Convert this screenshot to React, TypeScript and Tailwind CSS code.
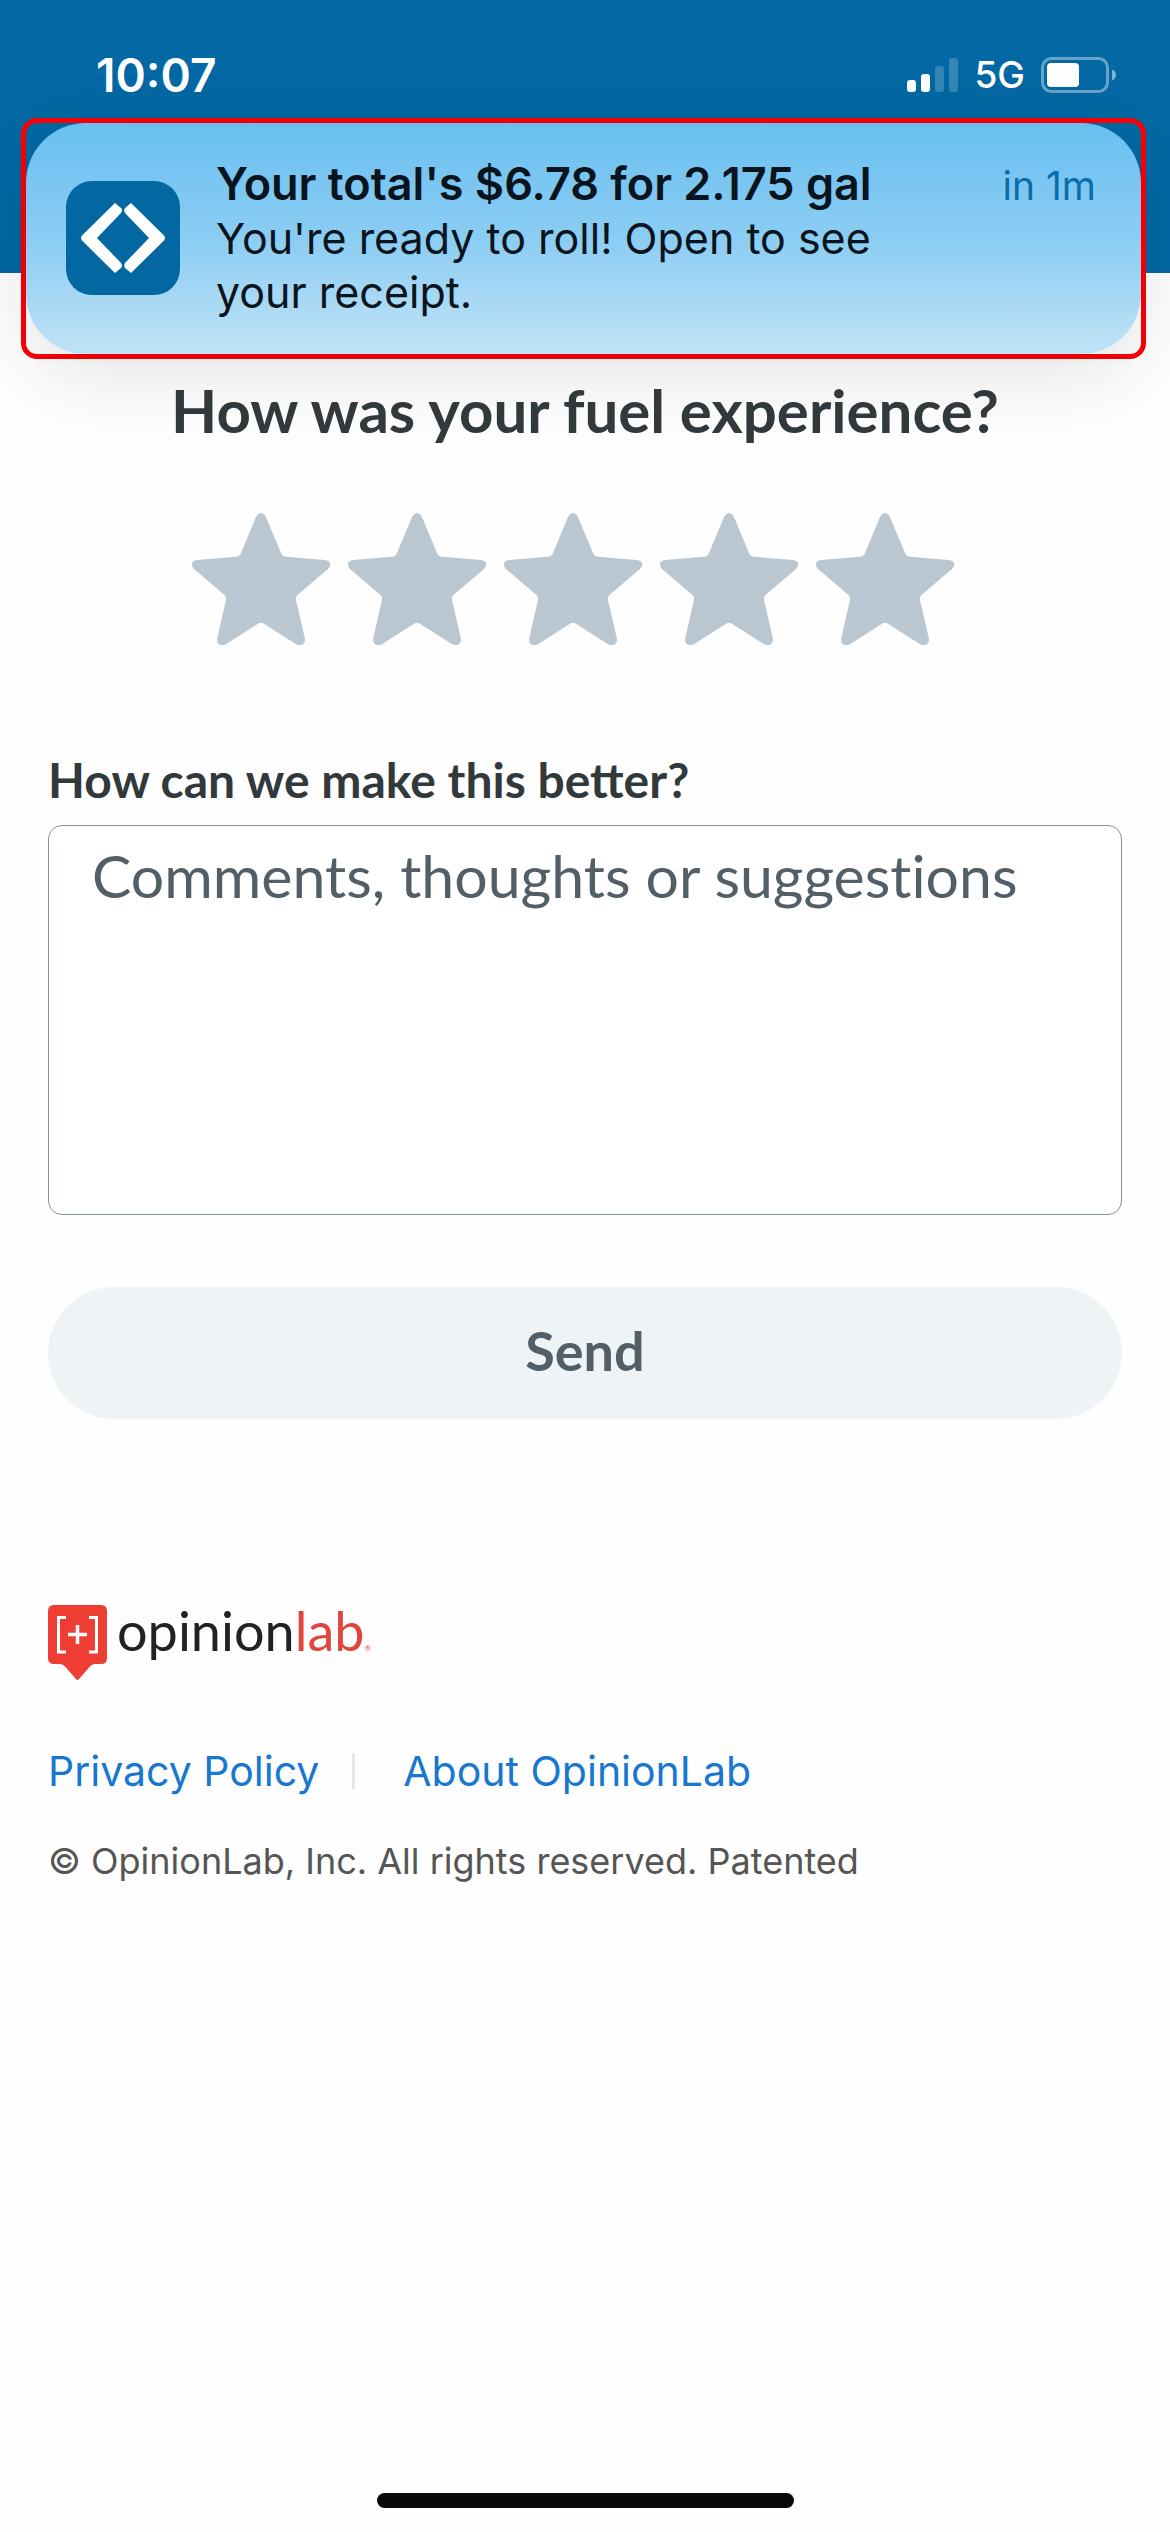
import React from "react";

function StatusBar() {
  return (
    <div className="flex items-center justify-between pt-[45px] pr-[53px] pl-[96px] text-white">
      <time className="text-[46px] leading-[60px] font-semibold">10:07</time>
      <div className="flex items-center">
        <svg className="h-[36px] w-[52px]" viewBox="0 0 52 36" fill="white" aria-label="Signal strength">
          <rect x="0" y="23" width="9" height="12" rx="3" />
          <rect x="14" y="17" width="9" height="18" rx="3" />
          <rect x="28" y="9" width="9" height="26" rx="3" opacity="0.2" />
          <rect x="42" y="1" width="9" height="34" rx="3" opacity="0.2" />
        </svg>
        <span className="mr-[16px] ml-[15px] text-[37px] leading-[60px] font-medium">5G</span>
        <svg className="h-[36px] w-[76px]" viewBox="0 0 76 36" fill="none" aria-label="Battery">
          <rect x="1.5" y="1.5" width="65" height="33" rx="9" stroke="white" strokeOpacity="0.4" strokeWidth="3" />
          <rect x="6" y="6" width="32" height="24" rx="4" fill="white" />
          <path d="M71 12.5C76.500 15 76.500 21 71 23.500Z" fill="white" fillOpacity="0.5" />
        </svg>
      </div>
    </div>
  );
}

function Notification() {
  return (
    <aside
      role="alert"
      className="absolute top-[118px] right-[24px] left-[21px] rounded-[16px] border-5 border-[#fb0007]"
    >
      <div className="flex items-center rounded-[60px] bg-linear-to-b from-[#68bff0] via-[#8bcdf3] to-[#c1e2f5] pt-[34px] pr-[45px] pb-[35px] pl-[40px] shadow-[0_20px_80px_rgba(0,0,0,0.11)]">
        <svg className="size-[114px] shrink-0" viewBox="0 0 114 114" aria-label="Sam's Club">
          <rect width="114" height="114" rx="26" fill="#0367a2" />
          <path d="M49 22L55 27Q57 29 55 32L31 57L55 82Q57 85 55 87L49 92L16 59.500Q14 57 16 54.500Z" fill="white" />
          <path d="M65 22L59 27Q57.500 29 59 32L83 57L59 82Q57.500 85 59 87L65 92L98 59.500Q100 57 98 54.500Z" fill="white" />
        </svg>
        <div className="ml-[36px] flex-1 text-[#0a141c]">
          <div className="flex h-[54px] items-baseline justify-between leading-[54px]">
            <strong className="text-[45px] font-semibold">Your total's $6.78 for 2.175 gal</strong>
            <span className="text-[39px] text-[#0a6dab]">in 1m</span>
          </div>
          <p className="max-w-[720px] text-[43px] leading-[54px]">You're ready to roll! Open to see your receipt.</p>
        </div>
      </div>
    </aside>
  );
}

function Star({ value }: { value: number }) {
  return (
    <label className="block cursor-pointer">
      <input type="radio" name="rating" value={value} aria-label={`${value} stars`} className="sr-only" />
      <svg className="h-[132px] w-[138px] fill-[#bac7d0]" viewBox="0 0 138 132">
        <path d="M64 4Q69-4 74 4L89 40Q90.500 43.500 94 43.700L133 47Q141.500 49 136 56L105.500 82Q103.500 84 104 87L113 126Q113 134 104.500 131.500L71.500 110.500Q69 109 66.500 110.500L33.500 131.500Q25 134 25 126L34 87Q34.500 84 32.500 82L2 56Q-3.500 49 5 47L44 43.700Q47.500 43.500 49 40Z" />
      </svg>
    </label>
  );
}

function OpinionLabLogo() {
  return (
    <div className="flex items-start">
      <svg className="h-[76px] w-[60px]" viewBox="0 0 60 76" aria-hidden="true">
        <path d="M6 0H53Q59 0 59 6V53Q59 59 53 59H47Q44 59 42 61.500L31 74Q29.500 76 28 74L17 61.500Q15 59 12 59H6Q0 59 0 53V6Q0 0 6 0Z" fill="#ee3e34" />
        <path d="M18 12.500H10.500V47H18M41 12.500H48.500V47H41" fill="none" stroke="white" strokeWidth="3" />
        <path d="M29.500 20V39M20 29.500H39" stroke="white" strokeWidth="3.500" />
      </svg>
      <p className="ml-[9px] text-[54px] leading-[51px] text-[#222]">
        opinion<span className="text-[#e2453c]">lab</span>
        <span className="text-[8px] text-[#e2453c]">®</span>
      </p>
    </div>
  );
}

export default function App() {
  return (
    <div className="relative flex min-h-screen flex-col bg-[#fefefe] font-['Inter',sans-serif]">
      <header className="h-[273px] bg-[#0368a3]">
        <StatusBar />
      </header>
      <Notification />

      <main className="relative flex flex-1 flex-col px-[48px] font-['Lato',sans-serif] text-[#32393d]">
        <form className="flex flex-col">
          <h1 className="mt-[101px] text-center text-[60px] leading-[72px] font-bold">How was your fuel experience?</h1>
          <fieldset aria-label="Rating" className="mt-[67px] mr-[24px] flex justify-center gap-[18px]">
            {[1, 2, 3, 4, 5].map((n) => (
              <Star key={n} value={n} />
            ))}
          </fieldset>
          <label htmlFor="comments" className="mt-[105px] text-[48px] leading-[60px] font-bold">
            How can we make this better?
          </label>
          <textarea
            id="comments"
            placeholder="Comments, thoughts or suggestions"
            className="mt-[15px] h-[390px] w-full resize-none rounded-[14px] border border-[#82909a] bg-white px-[43px] py-[14px] text-[59px] leading-[72px] text-[#535f67] [font-variant-ligatures:none] placeholder:text-[#535f67]"
          />
          <button type="submit" className="mt-[72px] h-[132px] rounded-full bg-[#eef3f6] pb-[6px] text-[54px] font-bold text-[#535f67]">
            Send
          </button>
        </form>

        <footer className="mt-[186px] font-['Inter',sans-serif]">
          <div className="font-['Lato',sans-serif]">
            <OpinionLabLogo />
          </div>
          <nav className="mt-[60px] flex items-center text-[41px] leading-[60px] text-[#1877cf]">
            <a href="#privacy">Privacy Policy</a>
            <span className="mr-[48px] ml-[33px] h-[36px] w-[3px] bg-[#e6e6e6]" />
            <a href="#about">About OpinionLab</a>
          </nav>
          <p className="mt-[30px] text-[36px] leading-[60px] text-[#555]">© OpinionLab, Inc. All rights reserved. Patented</p>
        </footer>
      </main>

      <div className="mb-[24px] h-[15px] w-[417px] self-center rounded-full bg-[#0a0a0a]" />
    </div>
  );
}
